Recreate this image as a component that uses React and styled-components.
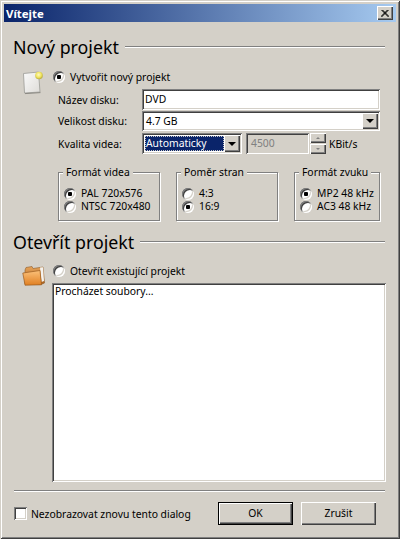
import React from 'react';
import styled, { createGlobalStyle, css } from 'styled-components';

const FACE = '#d4d0c8';

const GlobalStyle = createGlobalStyle`
  html, body {
    margin: 0;
    padding: 0;
    background: ${FACE};
  }
  body {
    font-family: 'Noto Sans', 'DejaVu Sans', sans-serif;
    font-size: 10.35px;
    color: #000;
  }
`;

const sunken = css`
  box-shadow: inset 1px 1px 0 #808080, inset -1px -1px 0 #fff, inset 2px 2px 0 #404040,
    inset -2px -2px 0 ${FACE};
`;

const raised = css`
  background: ${FACE};
  box-shadow: inset 1px 1px 0 #fff, inset -1px -1px 0 #404040, inset -2px -2px 0 #808080;
`;

const Dialog = styled.div`
  box-sizing: border-box;
  width: 400px;
  height: 539px;
  padding: 4px;
  background: ${FACE};
  box-shadow: inset 1px 1px 0 ${FACE}, inset -1px -1px 0 #404040, inset 2px 2px 0 #fff,
    inset -2px -2px 0 #808080;
`;

const TitleBar = styled.div`
  display: flex;
  align-items: center;
  justify-content: space-between;
  height: 18px;
  padding: 0 3px 0 2px;
  background: linear-gradient(90deg, #0a246a, #a6caf0);
  color: #fff;
  font-size: 11.4px;
  font-weight: bold;
`;

const CloseButton = styled.div`
  ${raised};
  display: flex;
  align-items: center;
  justify-content: center;
  width: 16px;
  height: 14px;
`;

const Content = styled.div`
  padding: 15px 10px 0 9px;
`;

const Heading = styled.div`
  display: flex;
  align-items: center;
  gap: 6px;
  height: 20px;
  font-size: 17.8px;
  margin-top: ${(props) => props.$top || 0}px;
`;

const Rule = styled.div`
  flex: 1;
  height: 1px;
  background: #808080;
  border-bottom: 1px solid #fff;
  margin-right: 1px;
`;

const Section = styled.div`
  display: flex;
  margin-top: ${(props) => props.$top}px;
  padding-left: 9px;
`;

const IconColumn = styled.div`
  flex: none;
  width: 30px;
`;

const Main = styled.div`
  flex: 1;
  min-width: 0;
`;

const Option = styled.div`
  display: flex;
  align-items: center;
  gap: ${(props) => props.$gap || 5}px;
  height: ${(props) => props.$height || 14}px;
  padding-left: ${(props) => props.$left || 1}px;
  line-height: ${(props) => props.$height || 14}px;
`;

const Radio = styled.span`
  ${sunken};
  flex: none;
  display: block;
  width: 12px;
  height: 12px;
  border-radius: 50%;
  background: ${(props) =>
    props.$checked
      ? 'radial-gradient(circle at 6px 6px, #000 0 2px, #fff 2.5px)'
      : '#fff'};
`;

const Form = styled.div`
  display: flex;
  flex-direction: column;
  gap: 1px;
  margin-top: 5px;
  padding: 0 6px;
`;

const FormRow = styled.div`
  display: flex;
  align-items: center;
  margin-top: ${(props) => props.$top || 0}px;
`;

const FieldLabel = styled.div`
  flex: none;
  width: 84px;
`;

const TextField = styled.div`
  ${sunken};
  box-sizing: border-box;
  flex: 1;
  height: 21px;
  padding: 3px 3px 0;
  line-height: 15px;
  background: #fff;
`;

const Combo = styled.div`
  ${sunken};
  box-sizing: border-box;
  display: flex;
  align-items: stretch;
  flex: ${(props) => (props.$width ? 'none' : 1)};
  width: ${(props) => props.$width || 0}px;
  height: ${(props) => props.$height}px;
  padding: 2px;
  background: #fff;
`;

const ComboValue = styled.div`
  flex: 1;
  min-width: 0;
  padding: 1px 0 0 2px;
  line-height: 14px;
  white-space: nowrap;
  overflow: hidden;
  ${(props) =>
    props.$selected &&
    css`
      margin: 1px 0 1px 1px;
      padding: 0 0 0 1px;
      background: #0a246a;
      color: #fff;
      outline: 1px dotted #c8c8c8;
      outline-offset: -1px;
    `}
`;

const ArrowButton = styled.div`
  ${raised};
  flex: none;
  display: flex;
  align-items: center;
  justify-content: center;
  width: 16px;
`;

const Arrow = styled.span`
  width: 0;
  height: 0;
  border-left: 4px solid transparent;
  border-right: 4px solid transparent;
  border-top: 4px solid #000;
`;

const DisabledField = styled.div`
  ${sunken};
  box-sizing: border-box;
  flex: none;
  width: 63px;
  height: 21px;
  margin-left: 4px;
  padding: 3px 3px 0 5px;
  line-height: 15px;
  color: #808080;
`;

const Spinner = styled.div`
  flex: none;
  display: flex;
  flex-direction: column;
  justify-content: space-between;
  width: 16px;
  height: 21px;
  margin-left: 1px;
`;

const SpinButton = styled.div`
  ${raised};
  display: flex;
  align-items: center;
  justify-content: center;
  height: 10px;
`;

const SpinArrow = styled.span`
  width: 0;
  height: 0;
  border-left: 2px solid transparent;
  border-right: 2px solid transparent;
  ${(props) =>
    props.$down ? 'border-top: 2px solid #808080;' : 'border-bottom: 2px solid #808080;'}
`;

const Unit = styled.div`
  margin-left: 3px;
`;

const Groups = styled.div`
  display: flex;
  gap: 16px;
  margin-top: 11px;
  padding-left: 6px;
`;

const Group = styled.fieldset`
  box-sizing: border-box;
  width: ${(props) => props.$width}px;
  height: 56px;
  margin: 0;
  padding: 8px 0 0 4px;
  border: 1px solid #808080;
  box-shadow: 1px 1px 0 #fff, inset 1px 1px 0 #fff;
`;

const GroupTitle = styled.legend`
  margin-left: 0;
  padding: 0 3px;
  line-height: 14px;
  background: ${FACE};
`;

const GroupsEnd = styled.div`
  height: 1px;
`;

const List = styled.div`
  ${sunken};
  box-sizing: border-box;
  height: 199px;
  margin-top: 5px;
  padding: 1px 3px;
  line-height: 15px;
  background: #fff;
`;

const Separator = styled.div`
  height: 1px;
  margin: 8px 1px 0 1px;
  background: #808080;
  border-bottom: 1px solid #fff;
`;

const Footer = styled.div`
  display: flex;
  align-items: center;
  margin-top: 10px;
  padding: 0 10px 0 1px;
`;

const CheckBox = styled.span`
  ${sunken};
  flex: none;
  display: block;
  width: 13px;
  height: 13px;
  margin-right: 4px;
  background: #fff;
`;

const Spacer = styled.div`
  flex: 1;
`;

const Button = styled.div`
  ${raised};
  box-sizing: border-box;
  flex: none;
  width: 75px;
  height: 23px;
  margin-left: 8px;
  line-height: 22px;
  text-align: center;
  ${(props) =>
    props.$default &&
    css`
      border: 1px solid #000;
      line-height: 20px;
    `}
`;

const NoteIcon = () => (
  <svg width="24" height="26" viewBox="0 0 24 26">
    <defs>
      <linearGradient id="paper" x1="0" y1="0" x2="1" y2="1">
        <stop offset="0" stopColor="#fafafa" />
        <stop offset="1" stopColor="#dedcd8" />
      </linearGradient>
      <radialGradient id="bulb" cx="0.45" cy="0.4" r="0.6">
        <stop offset="0" stopColor="#fffbc0" />
        <stop offset="0.6" stopColor="#efe35c" />
        <stop offset="1" stopColor="#b5a93c" />
      </radialGradient>
    </defs>
    <path d="M1.5 3.5 L16.5 2 L18 22 L2.5 23 Z" fill="url(#paper)" stroke="#9a9a96" strokeWidth="0.8" />
    <path d="M3 23.6 L18.5 22.6" stroke="#8c8a84" strokeWidth="1" />
    <circle cx="17" cy="5.5" r="3.8" fill="url(#bulb)" />
  </svg>
);

const FolderIcon = () => (
  <svg width="24" height="24" viewBox="0 0 24 24">
    <defs>
      <linearGradient id="folderBack" x1="0" y1="0" x2="0" y2="1">
        <stop offset="0" stopColor="#e8a45a" />
        <stop offset="1" stopColor="#a8601c" />
      </linearGradient>
      <linearGradient id="folderFront" x1="0" y1="0" x2="0" y2="1">
        <stop offset="0" stopColor="#fbc17a" />
        <stop offset="1" stopColor="#e07f22" />
      </linearGradient>
    </defs>
    <path d="M3 6 L4 3.5 L10 2.5 L11 4.5 L21 3 L22.5 19 L19 20.5 L3 20 Z" fill="url(#folderBack)" stroke="#8c5a2a" strokeWidth="0.6" />
    <path d="M18 3.6 L21 3.2 L22 17 L19.5 18 Z" fill="#f4f2ee" />
    <path d="M0.8 9 L18 6.5 L19.5 20.8 L3 21.2 Z" fill="url(#folderFront)" stroke="#9a5a1e" strokeWidth="0.7" />
  </svg>
);

const CloseGlyph = () => (
  <svg width="8" height="7" viewBox="0 0 8 7">
    <path d="M0.5 0 L7.5 7 M7.5 0 L0.5 7 M1.5 0 L8 6.5 M6.5 0 L0 6.5" stroke="#000" strokeWidth="1" fill="none" />
  </svg>
);

const groups = [
  { title: 'Formát videa', width: 102, options: ['PAL 720x576', 'NTSC 720x480'], checked: 0 },
  { title: 'Poměr stran', width: 102, options: ['4:3', '16:9'], checked: 1 },
  { title: 'Formát zvuku', width: 86, options: ['MP2 48 kHz', 'AC3 48 kHz'], checked: 0 },
];

export default function App() {
  return (
    <Dialog>
      <GlobalStyle />
      <TitleBar>
        <span>Vítejte</span>
        <CloseButton>
          <CloseGlyph />
        </CloseButton>
      </TitleBar>
      <Content>
        <Heading>
          Nový projekt
          <Rule />
        </Heading>
        <Section $top={13}>
          <IconColumn>
            <NoteIcon />
          </IconColumn>
          <Main>
            <Option>
              <Radio $checked />
              Vytvořit nový projekt
            </Option>
            <Form>
              <FormRow>
                <FieldLabel>Název disku:</FieldLabel>
                <TextField>DVD</TextField>
              </FormRow>
              <FormRow>
                <FieldLabel>Velikost disku:</FieldLabel>
                <Combo $height={20}>
                  <ComboValue>4.7 GB</ComboValue>
                  <ArrowButton>
                    <Arrow />
                  </ArrowButton>
                </Combo>
              </FormRow>
              <FormRow $top={1}>
                <FieldLabel>Kvalita videa:</FieldLabel>
                <Combo $width={100} $height={21}>
                  <ComboValue $selected>Automaticky</ComboValue>
                  <ArrowButton>
                    <Arrow />
                  </ArrowButton>
                </Combo>
                <DisabledField>4500</DisabledField>
                <Spinner>
                  <SpinButton>
                    <SpinArrow />
                  </SpinButton>
                  <SpinButton>
                    <SpinArrow $down />
                  </SpinButton>
                </Spinner>
                <Unit>KBit/s</Unit>
              </FormRow>
            </Form>
            <Groups>
              {groups.map((group) => (
                <Group key={group.title} $width={group.width}>
                  <GroupTitle>{group.title}</GroupTitle>
                  {group.options.map((option, index) => (
                    <Option key={option} $height={13} $left={0}>
                      <Radio $checked={index === group.checked} />
                      {option}
                    </Option>
                  ))}
                </Group>
              ))}
            </Groups>
            <GroupsEnd />
          </Main>
        </Section>
        <Heading $top={10}>
          Otevřít projekt
          <Rule />
        </Heading>
        <Section $top={12}>
          <IconColumn>
            <FolderIcon />
          </IconColumn>
          <Main>
            <Option>
              <Radio />
              Otevřít existující projekt
            </Option>
            <List>Procházet soubory...</List>
          </Main>
        </Section>
        <Separator />
        <Footer>
          <CheckBox />
          Nezobrazovat znovu tento dialog
          <Spacer />
          <Button $default>OK</Button>
          <Button>Zrušit</Button>
        </Footer>
      </Content>
    </Dialog>
  );
}
